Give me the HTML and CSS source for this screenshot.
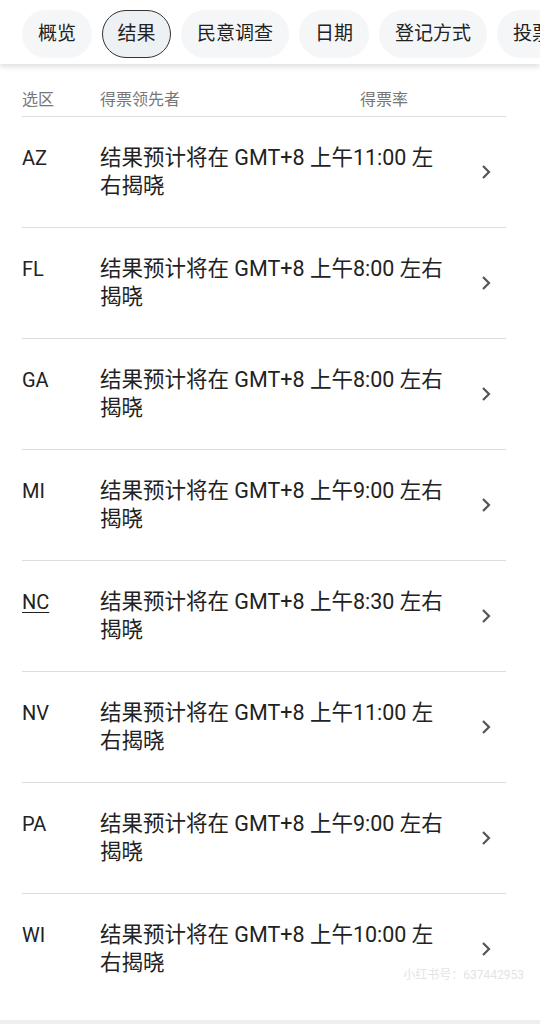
FILE: index.html
```html
<!DOCTYPE html>
<html lang="zh-CN">
<head>
    <meta charset="UTF-8">
    <meta name="viewport" content="width=device-width, initial-scale=1.0">
    <title>结果</title>
    <link rel="stylesheet" href="styles.css">
</head>
<body>
    <div class="tabs">
        <span class="tab">概览</span>
        <span class="tab active">结果</span>
        <span class="tab">民意调查</span>
        <span class="tab">日期</span>
        <span class="tab">登记方式</span>
        <span class="tab">投票方式</span>
    </div>

    <div class="table">
        <div class="table-head">
            <span class="col-state">选区</span>
            <span class="col-leader">得票领先者</span>
            <span class="col-rate">得票率</span>
        </div>

        <div class="row">
            <span class="col-state">AZ</span>
            <span class="col-text">结果预计将在 GMT+8 上午11:00 左右揭晓</span>
            <svg class="chevron" viewBox="0 0 12 16"><path d="M3 2l6 6-6 6"/></svg>
        </div>
        <div class="row">
            <span class="col-state">FL</span>
            <span class="col-text">结果预计将在 GMT+8 上午8:00 左右揭晓</span>
            <svg class="chevron" viewBox="0 0 12 16"><path d="M3 2l6 6-6 6"/></svg>
        </div>
        <div class="row">
            <span class="col-state">GA</span>
            <span class="col-text">结果预计将在 GMT+8 上午8:00 左右揭晓</span>
            <svg class="chevron" viewBox="0 0 12 16"><path d="M3 2l6 6-6 6"/></svg>
        </div>
        <div class="row">
            <span class="col-state">MI</span>
            <span class="col-text">结果预计将在 GMT+8 上午9:00 左右揭晓</span>
            <svg class="chevron" viewBox="0 0 12 16"><path d="M3 2l6 6-6 6"/></svg>
        </div>
        <div class="row">
            <span class="col-state linked">NC</span>
            <span class="col-text">结果预计将在 GMT+8 上午8:30 左右揭晓</span>
            <svg class="chevron" viewBox="0 0 12 16"><path d="M3 2l6 6-6 6"/></svg>
        </div>
        <div class="row">
            <span class="col-state">NV</span>
            <span class="col-text">结果预计将在 GMT+8 上午11:00 左右揭晓</span>
            <svg class="chevron" viewBox="0 0 12 16"><path d="M3 2l6 6-6 6"/></svg>
        </div>
        <div class="row">
            <span class="col-state">PA</span>
            <span class="col-text">结果预计将在 GMT+8 上午9:00 左右揭晓</span>
            <svg class="chevron" viewBox="0 0 12 16"><path d="M3 2l6 6-6 6"/></svg>
        </div>
        <div class="row last">
            <span class="col-state">WI</span>
            <span class="col-text">结果预计将在 GMT+8 上午10:00 左右揭晓</span>
            <svg class="chevron" viewBox="0 0 12 16"><path d="M3 2l6 6-6 6"/></svg>
        </div>
    </div>

    <div class="watermark">小红书号：637442953</div>
</body>
</html>
```

FILE: styles.css
```css
/* General */
body {
    font-family: Roboto, "Noto Sans CJK SC", sans-serif;
    margin: 0;
    padding: 0;
    background: #fff;
    color: #222;
    height: 1024px;
    overflow: hidden;
    position: relative;
    border-bottom: 4px solid #eee;
    box-sizing: border-box;
}

/* Tab pills */
.tabs {
    display: flex;
    gap: 10px;
    padding: 10px 0 6px 22px;
    white-space: nowrap;
    overflow: hidden;
    box-shadow: 0 3px 5px rgba(0, 0, 0, 0.12);
}

.tab {
    flex: none;
    height: 48px;
    line-height: 48px;
    padding: 0 16px;
    border-radius: 24px;
    background: #f5f6f7;
    font-size: 19px;
    color: #222;
    box-sizing: border-box;
}

.tab.active {
    background: #eef1f4;
    border: 1.5px solid #333;
    line-height: 45px;
    padding: 0 14.5px;
}

/* Table */
.table {
    padding: 0 34px 0 22px;
}

.table-head {
    display: flex;
    align-items: center;
    padding: 20px 0 4px;
    border-bottom: 1.5px solid #ddd;
    font-size: 16px;
    color: #777;
    height: 28px;
}

.col-state {
    width: 78px;
    flex: none;
}

.col-leader {
    width: 260px;
    flex: none;
}

.row {
    display: flex;
    align-items: flex-start;
    padding: 27px 0;
    border-bottom: 1.5px solid #ddd;
    font-size: 21.5px;
    line-height: 28px;
}

.row.last {
    border-bottom: none;
}

.row .col-state {
    color: #222;
    font-size: 20px;
}

.linked {
    text-decoration: underline;
    text-underline-offset: 3px;
    text-decoration-thickness: 1px;
}

.col-text {
    width: 349px;
    flex: none;
}

.chevron {
    width: 12px;
    height: 16px;
    margin: 20px 14px 0 auto;
    fill: none;
    stroke: #555;
    stroke-width: 2.2;
}

.watermark {
    position: absolute;
    right: 16px;
    bottom: 38px;
    font-size: 12px;
    color: #e4e4e4;
}
```
